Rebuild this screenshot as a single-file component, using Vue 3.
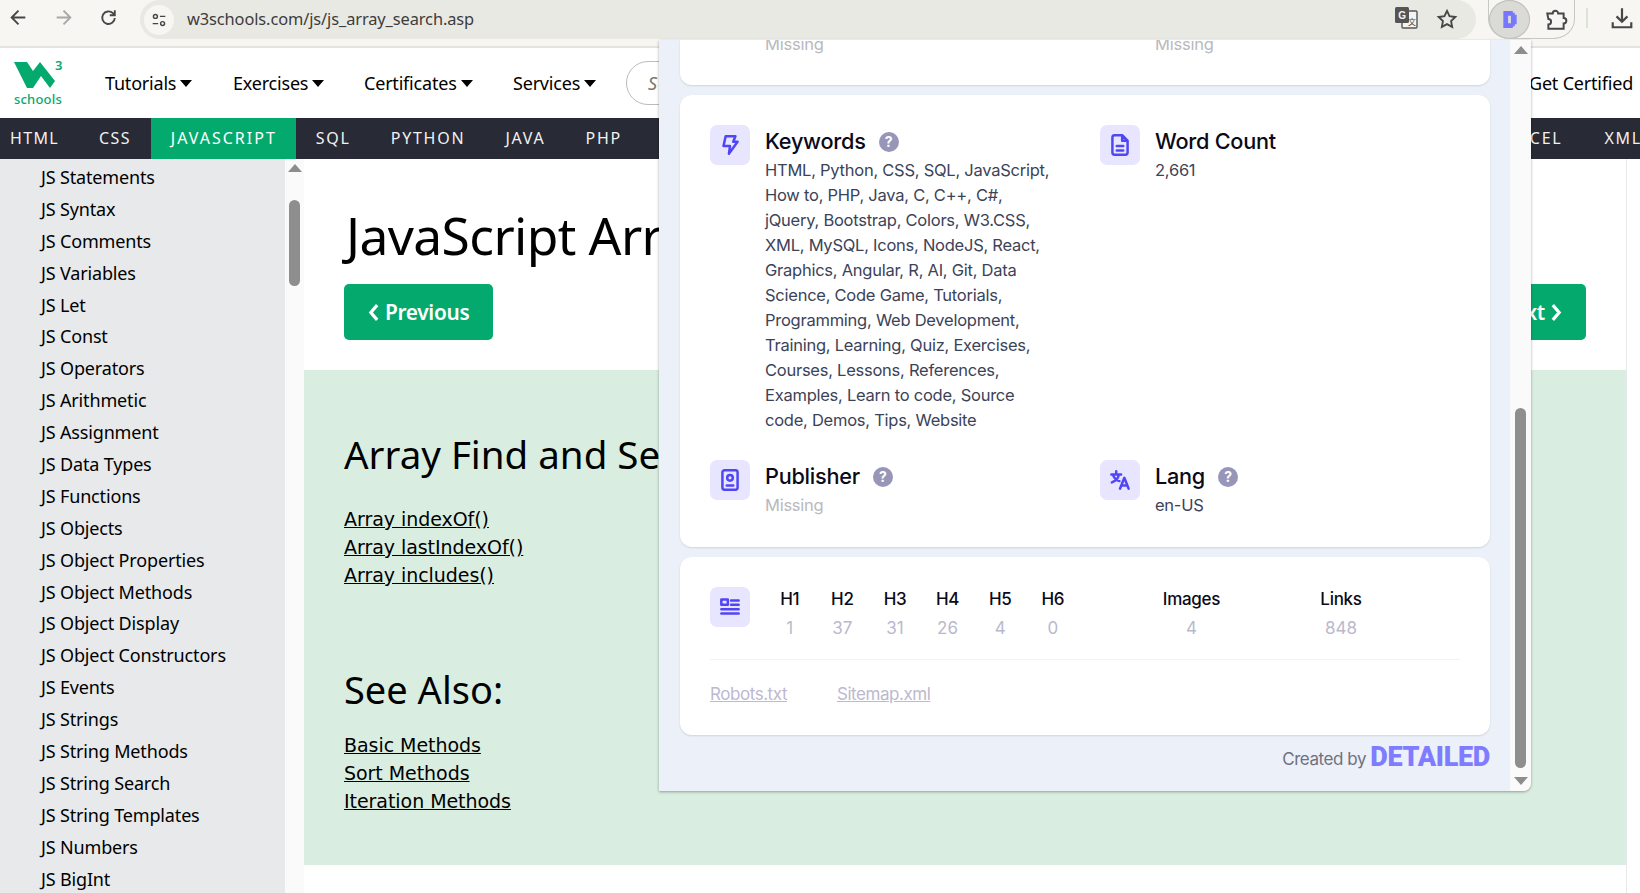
<script setup>
const topLinks = ['Tutorials', 'Exercises', 'Certificates', 'Services']
const navLeft = ['HTML', 'CSS', 'JAVASCRIPT', 'SQL', 'PYTHON', 'JAVA', 'PHP']
const sideItems = ['JS Statements','JS Syntax','JS Comments','JS Variables','JS Let','JS Const','JS Operators','JS Arithmetic','JS Assignment','JS Data Types','JS Functions','JS Objects','JS Object Properties','JS Object Methods','JS Object Display','JS Object Constructors','JS Events','JS Strings','JS String Methods','JS String Search','JS String Templates','JS Numbers','JS BigInt']
const keywordLines = ['HTML, Python, CSS, SQL, JavaScript,','How to, PHP, Java, C, C++, C#,','jQuery, Bootstrap, Colors, W3.CSS,','XML, MySQL, Icons, NodeJS, React,','Graphics, Angular, R, AI, Git, Data','Science, Code Game, Tutorials,','Programming, Web Development,','Training, Learning, Quiz, Exercises,','Courses, Lessons, References,','Examples, Learn to code, Source','code, Demos, Tips, Website']
const headings = [['H1','1'],['H2','37'],['H3','31'],['H4','26'],['H5','4'],['H6','0']]
</script>

<template>
  <div class="page">
    <div class="toolbar">
      <svg class="tb-icon back" viewBox="0 0 20 20"><path d="M16.5 10H4M10 3.5L3.5 10l6.5 6.5" /></svg>
      <svg class="tb-icon fwd" viewBox="0 0 20 20"><path d="M3.5 10H16M10 3.5l6.5 6.5-6.5 6.5" /></svg>
      <svg class="tb-icon reload" viewBox="0 0 20 20"><path d="M16 10.5a6 6 0 1 1-1.8-4.6L16 7.7M16 3v4.8h-4.8" /></svg>
      <div class="urlbar">
        <span class="site-chip">
          <svg viewBox="0 0 20 20" class="tune"><circle cx="6" cy="6" r="2.2" /><path d="M11 6h6M3 14h6" /><circle cx="14" cy="14" r="2.2" /></svg>
        </span>
        <span class="url">w3schools.com/js/js_array_search.asp</span>
        <svg class="translate" viewBox="0 0 24 24">
          <rect x="8" y="5" width="15" height="17" rx="1" fill="#f4f4f0" stroke="#555" stroke-width="1.4" />
          <rect x="1" y="1" width="14" height="16" rx="1.5" fill="#555" />
          <text x="4.2" y="13" class="tr-g">G</text>
          <text x="14" y="19" class="tr-x">文</text>
        </svg>
        <svg class="star" viewBox="0 0 20 20"><path d="M10 2.6l2.3 4.9 5.3.7-3.9 3.7 1 5.3-4.7-2.6-4.7 2.6 1-5.3-3.9-3.7 5.3-.7z" /></svg>
      </div>
      <div class="ext-pill">
        <span class="ext-d">
          <svg viewBox="0 0 16 20" width="16" height="19"><path fill="#7776ff" fill-rule="evenodd" d="M1 1h10v2h2v2h2v10h-2v2h-2v2H1zM6 6v8h3V6z" /></svg>
        </span>
        <svg class="puzzle" viewBox="0 0 22 22"><path d="M3 6h5a2.5 2.5 0 0 1 5 0h5v4a2.5 2.5 0 0 1 0 5v5H4v-4a2.5 2.5 0 0 0 0-5z" /></svg>
      </div>
      <span class="tb-sep"></span>
      <svg class="download" viewBox="0 0 22 22"><path d="M11 2v12M6 9.5l5 5 5-5M2.5 15v4.5h17V15" /></svg>
    </div>

    <header class="site-header">
      <div class="logo">
        <svg viewBox="0 -2 50 32" class="logo-w"><path d="M0 0h13l6 9 7-9 15 19-5 7-9-12-8 12h-6z" fill="#04aa6d" /><text x="41" y="8" class="logo-3">3</text></svg>
        <span class="logo-text">schools</span>
      </div>
      <nav class="top-links">
        <a v-for="l in topLinks" :key="l" class="top-link">{{ l }}<i class="caret"></i></a>
      </nav>
      <div class="search">S</div>
      <span class="certified">Get Certified</span>
    </header>

    <nav class="subnav">
      <a v-for="n in navLeft" :key="n" class="sub-item" :class="{ active: n === 'JAVASCRIPT' }">{{ n }}</a>
      <span class="sub-spacer"></span>
      <a class="sub-item">EXCEL</a>
      <a class="sub-item">XML</a>
    </nav>

    <div class="body-row">
      <aside class="sidebar">
        <ul class="side-list">
          <li v-for="s in sideItems" :key="s">{{ s }}</li>
        </ul>
        <div class="side-scroll">
          <i class="arrow-up"></i>
          <span class="side-thumb"></span>
        </div>
      </aside>
      <main class="main">
        <h1 class="title">JavaScript Array Search</h1>
        <div class="pager">
          <a class="btn"><svg viewBox="0 0 10 18" class="chev"><path d="M8 2L2 9l6 7" /></svg>Previous</a>
          <a class="btn">Next<svg viewBox="0 0 10 18" class="chev right"><path d="M2 2l6 7-6 7" /></svg></a>
        </div>
        <section class="panel">
          <h2 class="panel-h">Array Find and Search Methods</h2>
          <a class="plink">Array indexOf()</a>
          <a class="plink">Array lastIndexOf()</a>
          <a class="plink">Array includes()</a>
          <h2 class="panel-h second">See Also:</h2>
          <a class="plink">Basic Methods</a>
          <a class="plink">Sort Methods</a>
          <a class="plink">Iteration Methods</a>
        </section>
      </main>
      <div class="right-col"></div>
    </div>

    <div class="popup">
      <div class="pop-scroll">
        <div class="card first-card">
          <div class="cols"><span class="missing">Missing</span><span class="missing">Missing</span></div>
        </div>
        <div class="card meta-card">
          <div class="meta-grid">
            <div class="meta">
              <span class="ibox"><svg viewBox="0 0 24 24"><path d="M8 4h9l-2 5h4l-8 11 1-7H6z" /></svg></span>
              <div>
                <h3 class="meta-h">Keywords<span class="help">?</span></h3>
                <p class="meta-v"><span v-for="k in keywordLines" :key="k" class="kw">{{ k }}</span></p>
              </div>
            </div>
            <div class="meta">
              <span class="ibox"><svg viewBox="0 0 24 24"><path d="M14 3H7a2 2 0 0 0-2 2v14a2 2 0 0 0 2 2h10a2 2 0 0 0 2-2V8zM14 3v5h5M9 13h6M9 17h6" /></svg></span>
              <div>
                <h3 class="meta-h">Word Count</h3>
                <p class="meta-v">2,661</p>
              </div>
            </div>
            <div class="meta">
              <span class="ibox"><svg viewBox="0 0 24 24"><rect x="5" y="3" width="14" height="18" rx="2" /><circle cx="12" cy="10" r="2.6" /><path d="M9 17h6" /></svg></span>
              <div>
                <h3 class="meta-h">Publisher<span class="help">?</span></h3>
                <p class="meta-v is-missing">Missing</p>
              </div>
            </div>
            <div class="meta">
              <span class="ibox"><svg viewBox="0 0 24 24"><path d="M4 7h9M8.5 4v3M11 7c-.6 3.5-3 6-6.5 7.2M5.5 7c.7 2.6 3 5 6 6M12 20l4-10 4 10M13.5 17h5" /></svg></span>
              <div>
                <h3 class="meta-h">Lang<span class="help">?</span></h3>
                <p class="meta-v">en-US</p>
              </div>
            </div>
          </div>
        </div>
        <div class="card stat-card">
          <div class="stat-row">
            <span class="ibox"><svg viewBox="0 0 24 24"><rect x="4" y="5" width="6" height="5" /><path d="M13 6h7M13 10h7M4 14h16M4 18h16" /></svg></span>
            <div class="h-cols">
              <div v-for="h in headings" :key="h[0]" class="stat h-stat"><b>{{ h[0] }}</b><span>{{ h[1] }}</span></div>
            </div>
            <div class="stat img-stat"><b>Images</b><span>4</span></div>
            <div class="stat link-stat"><b>Links</b><span>848</span></div>
          </div>
          <div class="stat-links">
            <a>Robots.txt</a>
            <a>Sitemap.xml</a>
          </div>
        </div>
        <div class="credit">Created by <b>DETAILED</b></div>
      </div>
      <div class="pop-bar">
        <i class="arrow-up"></i>
        <span class="pop-thumb"></span>
        <i class="arrow-down"></i>
      </div>
    </div>
  </div>
</template>

<style>
html, body { margin: 0; overflow: hidden; background: #fff; }
</style>

<style scoped>
.page { position: relative; width: 1640px; height: 893px; overflow: hidden; background: #fff; font-family: "Noto Sans", sans-serif; color: #000; }
.toolbar { height: 46px; background: #f8f6f2; border-bottom: 2px solid #e4e4df; display: flex; align-items: flex-start; position: relative; }
.tb-icon { width: 21px; height: 21px; fill: none; stroke: #474747; stroke-width: 1.8; margin-top: 7px; flex: none; }
.back { margin-left: 8px; }
.fwd { margin-left: 24px; stroke: #a8a8a8; }
.reload { margin-left: 24px; }
.urlbar { margin-left: 21px; width: 1336px; height: 39px; background: #e9e9e4; border-radius: 20px; display: flex; align-items: center; position: relative; flex: none; }
.site-chip { width: 30px; height: 30px; margin-left: 4px; border-radius: 50%; background: #f8f6f2; display: flex; align-items: center; justify-content: center; flex: none; }
.tune { width: 18px; height: 18px; fill: none; stroke: #444; stroke-width: 1.6; }
.url { margin-left: 13px; margin-top: -2px; font-size: 16.4px; color: #3c3c3c; letter-spacing: -.1px; }
.translate { position: absolute; left: 1254px; top: 6px; width: 24px; height: 24px; }
.tr-g { font: bold 10px "Liberation Sans", sans-serif; fill: #f4f4f0; }
.tr-x { font: 8px "Noto Sans CJK SC", sans-serif; fill: #444; }
.star { position: absolute; left: 1296px; top: 8px; width: 22px; height: 22px; fill: none; stroke: #474747; stroke-width: 1.7; }
.ext-pill { margin-left: 12px; width: 87px; height: 39px; border: 1px solid #c8c8c4; border-top: 0; border-radius: 0 0 22px 22px / 0 0 20px 20px; box-sizing: border-box; display: flex; align-items: center; flex: none; }
.ext-d { width: 41px; height: 39px; background: #dadad6; border-radius: 50%; display: flex; align-items: center; justify-content: center; box-shadow: inset 0 0 0 1px #c0c0bc; flex: none; }
.puzzle { width: 24px; height: 24px; margin-left: 14px; fill: none; stroke: #474747; stroke-width: 1.8; flex: none; }
.tb-sep { width: 2px; height: 20px; margin: 8px 0 0 11px; background: #dbe3d5; flex: none; }
.download { width: 24px; height: 24px; margin: 6px 0 0 22px; fill: none; stroke: #474747; stroke-width: 2; flex: none; }

.site-header { height: 70px; display: flex; align-items: center; position: relative; background: #fff; }
.logo { width: 50px; margin-left: 14px; display: flex; flex-direction: column; flex: none; align-items: flex-start; }
.logo-w { width: 50px; height: 32px; overflow: visible; }
.logo-3 { font: 600 13px "Noto Sans", sans-serif; fill: #04aa6d; }
.logo-text { font-size: 13px; font-weight: 500; color: #04aa6d; line-height: 14px; letter-spacing: .2px; }
.top-links { display: flex; margin-left: 41px; flex: none; }
.top-link { font-size: 18px; display: flex; align-items: center; width: 131px; letter-spacing: -.2px; }
.top-link:nth-child(1) { width: 128px; }
.top-link:nth-child(3) { width: 149px; }
.caret { width: 0; height: 0; border: 6px solid transparent; border-top: 7px solid #000; border-bottom: 0; margin-left: 4px; }
.search { position: absolute; left: 626px; top: 13px; width: 300px; height: 44px; box-sizing: border-box; border: 1px solid #bbb; border-radius: 22px; padding-left: 21px; font-size: 18px; font-style: italic; line-height: 42px; color: #777; }
.certified { margin-left: auto; margin-right: 7px; font-size: 18px; letter-spacing: -.2px; }

.subnav { height: 41px; background: #282a35; display: flex; align-items: stretch; color: #f1f1f1; overflow: hidden; }
.sub-item { padding: 0 20px; font-size: 16px; letter-spacing: 1.75px; line-height: 41px; flex: none; }
.sub-item:nth-child(-n+2) { letter-spacing: 1.35px; }
.sub-item:first-child { padding-left: 10px; }
.sub-item.active { background: #04aa6d; color: #fff; width: 145px; box-sizing: border-box; padding: 0 0 0 20px; letter-spacing: 2px; }
.sub-spacer { flex: 1; }
.sub-item:nth-last-child(2) { padding-right: 22px; }
.sub-item:last-child { margin-right: -22px; }

.body-row { display: flex; height: 734px; }
.sidebar { width: 304px; display: flex; flex: none; background: #e7e9eb; }
.side-list { list-style: none; margin: 0; padding: 2px 0 0 41px; width: 285px; box-sizing: border-box; flex: none; overflow: hidden; }
.side-list li { height: 31.9px; line-height: 32px; font-size: 18px; letter-spacing: -.16px; white-space: nowrap; }
.side-scroll { width: 19px; background: #fafafa; display: flex; flex-direction: column; align-items: center; flex: none; }
.arrow-up { width: 0; height: 0; border: 7px solid transparent; border-bottom: 8px solid #8d8d8d; border-top: 0; }
.arrow-down { width: 0; height: 0; border: 7px solid transparent; border-top: 8px solid #8d8d8d; border-bottom: 0; }
.side-scroll .arrow-up { margin-top: 5px; }
.side-thumb { width: 11px; height: 86px; margin-top: 28px; background: #8e8e8e; border-radius: 6px; }
.main { width: 1322px; flex: none; min-width: 0; overflow: hidden; }
.title { margin: 40px 0 0 42px; font-size: 51.5px; line-height: 72px; font-weight: 400; letter-spacing: -.6px; white-space: nowrap; }
.pager { margin: 13px 0 0 40px; width: 1242px; display: flex; justify-content: space-between; }
.btn { display: flex; align-items: center; justify-content: center; gap: 5px; padding: 0 24px; height: 56px; background: #04aa6d; color: #fff; font-size: 20.8px; font-weight: 600; border-radius: 5px; letter-spacing: -.3px; }
.chev { width: 12px; height: 19px; fill: none; stroke: #fff; stroke-width: 3; }
.panel { margin-top: 30px; height: 495px; box-sizing: border-box; background: #d9eee1; padding: 62px 0 0 40px; display: flex; flex-direction: column; align-items: flex-start; }
.panel-h { margin: 0 0 29px; font-size: 38.5px; line-height: 44px; font-weight: 400; white-space: nowrap; }
.panel-h.second { margin-top: 78px; margin-bottom: 20px; font-size: 38px; }
.plink { font-size: 19px; line-height: 28px; text-decoration: underline; font-family: "DejaVu Sans", sans-serif; letter-spacing: -.05px; }
.right-col { flex: 1; border-left: 1px solid #e7e9eb; }

.popup { position: absolute; left: 659px; top: 40px; width: 872px; height: 751px; background: #ecf0f8; box-shadow: 0 1px 3px rgba(0,0,0,.35); display: flex; overflow: hidden; border-bottom-right-radius: 8px; font-family: Inter, sans-serif; }
.pop-scroll { width: 851px; flex: none; padding: 0 20px 0 21px; box-sizing: border-box; }
.pop-bar { width: 21px; background: #fafafa; display: flex; flex-direction: column; align-items: center; flex: none; }
.pop-bar .arrow-up { margin-top: 6px; }
.pop-thumb { width: 11px; height: 360px; margin-top: 354px; background: #8e8e8e; border-radius: 6px; }
.pop-bar .arrow-down { margin-top: 9px; }
.card { background: #fff; border-radius: 12px; box-shadow: 0 1px 2px rgba(0,0,0,.12); margin-bottom: 10px; }
.first-card { height: 45px; border-radius: 0 0 12px 12px; padding-left: 85px; display: flex; align-items: flex-start; }
.cols { display: flex; margin-top: -6px; flex: none; }
.cols .missing { width: 390px; line-height: 20px; flex: none; }
.missing { color: #b9b9bd; font-size: 16.5px; letter-spacing: -.2px; }
.meta-card { height: 452px; padding: 30px 30px 0; box-sizing: border-box; }
.meta-grid { display: grid; grid-template-columns: 390px 1fr; row-gap: 27px; }
.meta { display: flex; gap: 15px; align-items: flex-start; }
.ibox { width: 40px; height: 40px; background: #e8e6ff; border-radius: 7px; display: flex; align-items: center; justify-content: center; flex: none; }
.ibox svg { width: 26px; height: 26px; fill: none; stroke: #5146f5; stroke-width: 2.3; stroke-linejoin: round; stroke-linecap: round; }
.meta-h { margin: 0; font-size: 21.7px; line-height: 33px; font-weight: 500; color: #0a0a18; display: flex; align-items: center; letter-spacing: -.25px; }
.help { width: 20px; height: 20px; margin-left: 13px; border-radius: 50%; background: #9896b8; color: #fff; font-size: 14px; font-weight: 700; line-height: 20px; text-align: center; letter-spacing: 0; }
.meta-v { margin: 0; font-size: 16.5px; line-height: 25px; color: #3c4358; letter-spacing: -.25px; }
.meta-v.is-missing { color: #b9b9bd; }
.kw { display: block; white-space: nowrap; }
.stat-card { height: 178px; padding: 30px 30px 0; box-sizing: border-box; }
.stat-row { display: flex; height: 72px; border-bottom: 1px solid #f2f2f4; }
.h-cols { display: flex; margin-left: 13.5px; width: 334px; flex: none; }
.stat { display: flex; flex-direction: column; align-items: center; }
.stat b { font-size: 17px; font-weight: 500; line-height: 24px; color: #0a0a18; letter-spacing: -.3px; }
.stat span { font-size: 17px; line-height: 34px; color: #b9b9cd; }
.h-stat { width: 52.6px; }
.img-stat { width: 80px; margin-left: 54px; }
.link-stat { width: 60px; margin-left: 79.5px; }
.stat-links { display: flex; gap: 50px; padding-top: 21px; }
.stat-links a { color: #bdb9d0; text-decoration: underline; font-size: 17px; letter-spacing: -.45px; line-height: 26px; }
.credit { text-align: right; font-size: 17px; color: #6f7180; letter-spacing: -.45px; line-height: 24px; white-space: nowrap; }
.credit b { color: #7f7cff; font: 900 27px/24px Roboto, sans-serif; letter-spacing: -.3px; vertical-align: -1px; }
</style>
